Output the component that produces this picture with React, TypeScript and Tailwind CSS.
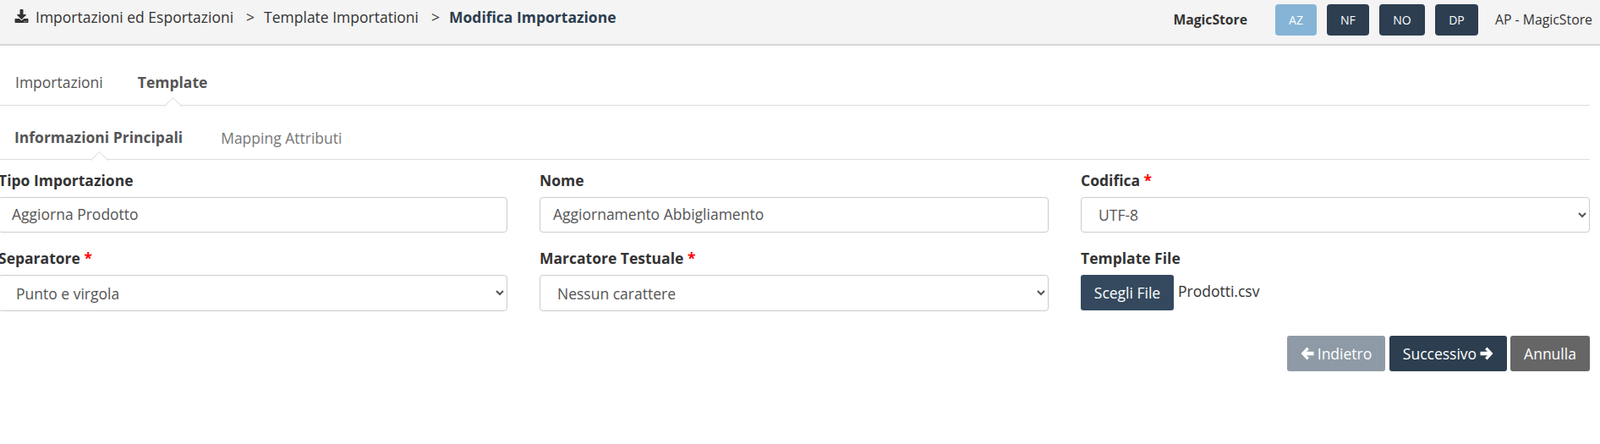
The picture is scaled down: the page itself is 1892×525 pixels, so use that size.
import { FaDownload } from 'react-icons/fa';

const userBadges = [
  { label: 'AZ', className: 'w-[49px] bg-[#85b4d6]' },
  { label: 'NF', className: 'w-[50px] bg-[#2c3e50]' },
  { label: 'NO', className: 'w-[54px] bg-[#2c3e50]' },
  { label: 'DP', className: 'w-[51px] bg-[#2c3e50]' },
];

function Notch({ left }: { left: string }) {
  return (
    <span
      className={`absolute ${left} bottom-[-8px] h-[15px] w-[15px] rotate-45 border-l border-t border-[#dddddd] bg-white`}
    />
  );
}

function ArrowLeft() {
  return (
    <svg viewBox="0 0 16 16" className="h-[16px] w-[16px] fill-current">
      <path d="M7.5 0.5 L0.5 8 L7.5 15.5 L10 13 L7 10.2 H15.5 V5.8 H7 L10 3 Z" />
    </svg>
  );
}

function ArrowRight() {
  return (
    <svg viewBox="0 0 16 16" className="h-[16px] w-[16px] fill-current">
      <path d="M8.5 0.5 L15.5 8 L8.5 15.5 L6 13 L9 10.2 H0.5 V5.8 H9 L6 3 Z" />
    </svg>
  );
}

function Field({ label, required, children }: { label: string; required?: boolean; children: React.ReactNode }) {
  return (
    <div>
      <label className="mb-[8px] block h-[24px] font-bold leading-[24px] text-[#333333]">
        {label}
        {required && <span className="text-[#ff0000]"> *</span>}
      </label>
      {children}
    </div>
  );
}

function TextBox({ value }: { value: string }) {
  return (
    <input
      readOnly
      value={value}
      className="block h-[42px] w-full rounded-[4px] border border-[#cccccc] bg-white px-[15px] pb-[2px] text-[17.5px] text-[#555555] outline-none"
    />
  );
}

function Dropdown({ value, height = 'h-[43px]' }: { value: string; height?: string }) {
  return (
    <select
      defaultValue={value}
      className={`block ${height} w-full rounded-[4px] border border-[#cccccc] bg-white px-[16px] text-[17.5px] text-[#555555] outline-none`}
    >
      <option>{value}</option>
    </select>
  );
}

export default function App() {
  return (
    <div className="h-[525px] overflow-hidden bg-white font-['Open_Sans',sans-serif] text-[17.5px] text-[#333333]">
      <header className="flex h-[54px] items-start justify-between border-b-2 border-[#d8d8d8] bg-[#f4f4f4]">
        <nav className="flex items-center pl-[17px] pt-[8px] leading-[24px]">
          <FaDownload className="mb-[3px] h-[16px] w-[17px] text-[#333333]" />
          <span className="ml-[8px]">Importazioni ed Esportazioni</span>
          <span className="ml-[15px]">&gt;</span>
          <span className="ml-[11px]">Template Importationi</span>
          <span className="ml-[15px]">&gt;</span>
          <span className="ml-[11px] font-bold text-[#2c3e50]">Modifica Importazione</span>
        </nav>
        <div className="flex items-center pr-[9px] pt-[5px]">
          <span className="mr-[33px] text-[15.7px] font-bold text-[#333333]">MagicStore</span>
          <div className="flex gap-[12px]">
            {userBadges.map((b) => (
              <span
                key={b.label}
                className={`flex h-[37px] items-center justify-center rounded-[4px] text-[14px] font-medium text-white ${b.className}`}
              >
                {b.label}
              </span>
            ))}
          </div>
          <span className="ml-[20px] text-[15.8px]">AP - MagicStore</span>
        </div>
      </header>

      <div className="mr-[12px]">
        <div className="mt-[23px] flex h-[48px] items-start border-b border-[#dddddd] pl-[18px] leading-[24px]">
          <span className="mt-[8px] text-[#555555]">Importazioni</span>
          <span className="relative ml-[41px] mt-[8px] h-[40px] font-bold text-[#555555]">
            Template
            <Notch left="left-[34px]" />
          </span>
        </div>

        <div className="mt-[14px] flex h-[50px] items-start border-b border-[#dddddd] pl-[17px] leading-[24px]">
          <span className="relative mt-[11px] h-[39px] font-bold text-[#555555]">
            Informazioni Principali
            <Notch left="left-[93px]" />
          </span>
          <span className="ml-[45px] mt-[12px] text-[#777777]">Mapping Attributi</span>
        </div>

        <form className="ml-[-2px] mt-[12px] grid grid-cols-3 gap-x-[38px] gap-y-[18px]">
          <Field label="Tipo Importazione">
            <TextBox value="Aggiorna Prodotto" />
          </Field>
          <Field label="Nome">
            <TextBox value="Aggiornamento Abbigliamento" />
          </Field>
          <Field label="Codifica" required>
            <Dropdown value="UTF-8" height="h-[42px]" />
          </Field>
          <Field label="Separatore" required>
            <Dropdown value="Punto e virgola" />
          </Field>
          <Field label="Marcatore Testuale" required>
            <Dropdown value="Nessun carattere" />
          </Field>
          <Field label="Template File">
            <div className="flex items-start">
              <button type="button" className="h-[42px] w-[110px] rounded-[3px] bg-[#34495e] text-white">
                Scegli File
              </button>
              <span className="ml-[5px] mt-[7px] leading-[24px]">Prodotti.csv</span>
            </div>
          </Field>
        </form>

        <div className="mt-[29px] flex justify-end">
          <button type="button" className="flex h-[42px] w-[116px] items-center justify-center gap-[4px] rounded-[3px] bg-[#8e9aa6] text-white">
            <ArrowLeft />
            Indietro
          </button>
          <button type="button" className="ml-[5px] flex h-[42px] w-[139px] items-center justify-center gap-[4px] rounded-[3px] bg-[#2c3e50] text-white">
            Successivo
            <ArrowRight />
          </button>
          <button type="button" className="ml-[4px] h-[42px] w-[94px] rounded-[3px] bg-[#666666] text-white">
            Annulla
          </button>
        </div>
      </div>
    </div>
  );
}
